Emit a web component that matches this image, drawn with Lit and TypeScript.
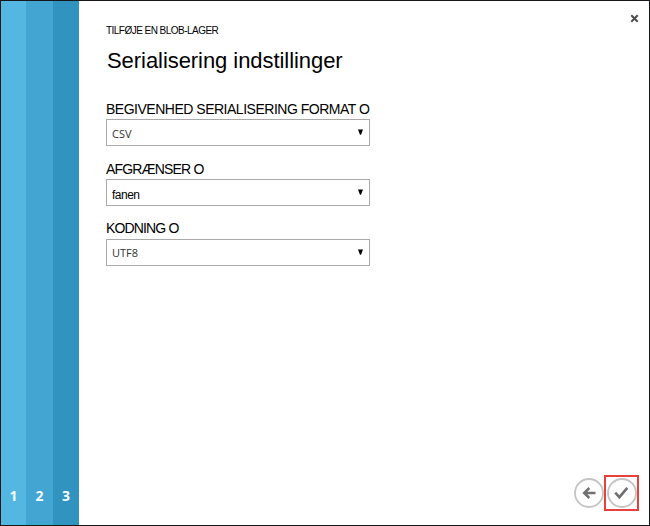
import { LitElement, html, css, svg } from "lit";
import { customElement } from "lit/decorators.js";

const FIELDS = [
  { cls: "format", label: "BEGIVENHED SERIALISERING FORMAT O", value: "CSV", tone: "soft" },
  { cls: "delimiter", label: "AFGRÆNSER O", value: "fanen", tone: "plain" },
  { cls: "encoding", label: "KODNING O", value: "UTF8", tone: "soft" },
];

@customElement("app-root")
export class AppRoot extends LitElement {
  static styles = css`
    :host {
      display: flex;
      box-sizing: border-box;
      width: 650px;
      height: 526px;
      border: 1px solid #16171b;
      background: #fff;
      color: #000;
      font-family: "Liberation Sans", Arial, sans-serif;
      overflow: hidden;
    }
    .steps {
      display: grid;
      grid-template-columns: 25px 27px 26px;
      flex: none;
    }
    .step {
      display: flex;
      align-items: flex-end;
      justify-content: center;
      padding-bottom: 19px;
      color: #f4fbff;
      font: 700 14px/20px "Open Sans", "Noto Sans", sans-serif;
    }
    .s1 { background: #53b7e2; }
    .s2 { background: #42a5d2; }
    .s3 { background: #3093c0; }
    .panel {
      flex: 1;
      display: flex;
      flex-direction: column;
      padding: 13px 10px 14px 27px;
    }
    header {
      display: flex;
      justify-content: space-between;
      height: 75px;
    }
    .crumb {
      margin-top: 11px;
      font-size: 10px;
      line-height: 12px;
      letter-spacing: -0.53px;
      white-space: nowrap;
    }
    h1 {
      margin: 10px 0 0 1px;
      font-size: 22px;
      line-height: 28px;
      font-weight: 400;
      letter-spacing: -0.06px;
      white-space: nowrap;
    }
    .close {
      width: 9px;
      height: 9px;
      margin: 0 0 0 1px;
    }
    .fields {
      display: grid;
      grid-template-columns: 264px;
      grid-template-rows: 60px 60px 60px;
    }
    .label {
      height: 16px;
      margin-bottom: 2px;
      padding-top: 12px;
      font-size: 14px;
      line-height: 16px;
      white-space: nowrap;
    }
    .field { display: flex; flex-direction: column; }
    .format .label { letter-spacing: -0.49px; }
    .delimiter .label { letter-spacing: -0.83px; }
    .encoding .label { letter-spacing: -0.85px; padding-top: 11px; margin-bottom: 3px; }
    .select {
      display: flex;
      justify-content: space-between;
      box-sizing: border-box;
      height: 27px;
      border: 1px solid #a9a9a9;
      padding: 0 6px 0 5px;
    }
    .soft { font: 11px/27px "Open Sans", sans-serif; color: #333; }
    .encoding .soft { line-height: 26px; }
    .plain { font-size: 12px; line-height: 31px; letter-spacing: -0.5px; }
    .caret { width: 5px; height: 6px; margin-top: 9px; }
    footer {
      display: flex;
      justify-content: flex-end;
      align-items: center;
      margin-top: auto;
    }
    .finish {
      display: flex;
      border: 2px solid #e8403a;
      box-sizing: border-box;
      width: 35px;
      height: 36px;
      align-items: center;
      justify-content: center;
    }
    svg { display: block; }
  `;

  private round(icon: unknown) {
    return html`<svg width="30" height="31" viewBox="0 0 30 31">
      <circle cx="15" cy="15" r="14" fill="#fff" stroke="#c4c4c4" stroke-width="1.8" />
      ${icon}
    </svg>`;
  }

  render() {
    return html`
      <nav class="steps">
        ${[1, 2, 3].map((n) => html`<div class="step s${n}">${n}</div>`)}
      </nav>
      <section class="panel">
        <header>
          <div>
            <div class="crumb">TILFØJE EN BLOB-LAGER</div>
            <h1>Serialisering indstillinger</h1>
          </div>
          <svg class="close" viewBox="0 0 9 9">
            <path d="M1.3 1.3 7.7 7.7M7.7 1.3 1.3 7.7" stroke="#4c4c4c" stroke-width="2" />
          </svg>
        </header>
        <div class="fields">
          ${FIELDS.map(
            (f) => html`<div class="field ${f.cls}">
              <span class="label">${f.label}</span>
              <div class="select">
                <span class=${f.tone}>${f.value}</span>
                <svg class="caret" viewBox="0 0 5 6"><path d="M0 0.5H5L3 5.7H2Z" /></svg>
              </div>
            </div>`
          )}
        </div>
        <footer>
          ${this.round(
            svg`<path d="M21.5 15H10.5M15.3 10 10.2 15 15.3 20" fill="none" stroke="#707070" stroke-width="2.5" />`
          )}
          <div class="finish">
            ${this.round(
              svg`<path d="M8.2 14.7 12.4 19.2 20.3 9.8" fill="none" stroke="#707070" stroke-width="2.6" />`
            )}
          </div>
        </footer>
      </section>
    `;
  }
}
